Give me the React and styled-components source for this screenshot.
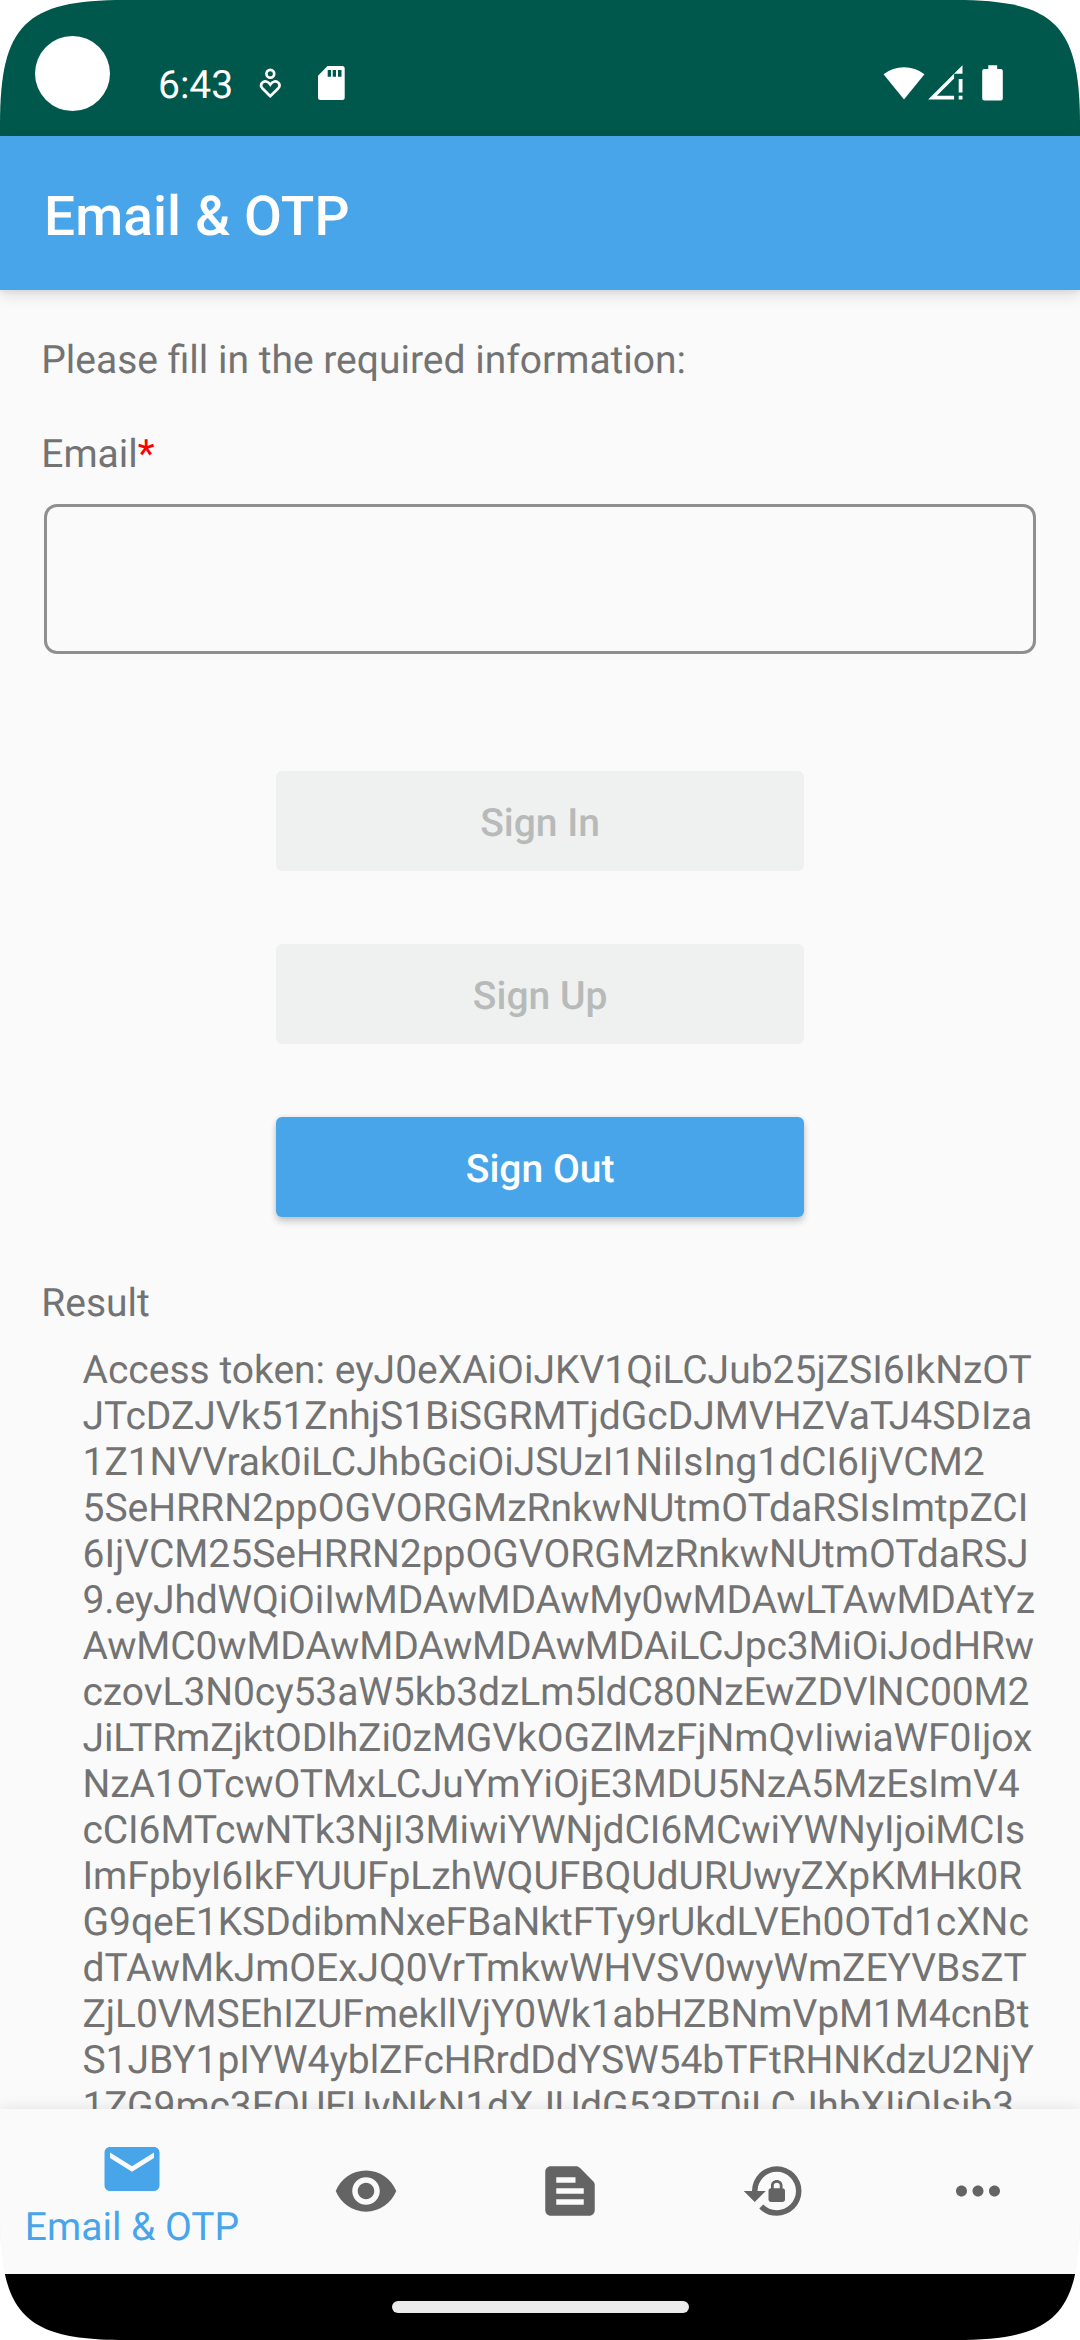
import React from "react";
import styled, { createGlobalStyle } from "styled-components";
import {
  MdEmail,
  MdVisibility,
  MdTextSnippet,
  MdMoreHoriz,
} from "react-icons/md";

const GlobalStyle = createGlobalStyle`
  * { box-sizing: border-box; }
  body { margin: 0; background: #fff; }
`;

const Screen = styled.div`
  width: 1080px;
  height: 2340px;
  display: flex;
  flex-direction: column;
  overflow: hidden;
  background: #fafafa;
  color: #737373;
  font-family: Roboto, "Liberation Sans", sans-serif;
  font-size: 39px;
  line-height: 46px;
  text-rendering: geometricPrecision;
  clip-path: path(
    "M0 125C0 25 25 0 125 0H955C1055 0 1080 25 1080 125V2215C1080 2315 1055 2340 955 2340H125C25 2340 0 2315 0 2215Z"
  );
`;

const StatusBar = styled.header`
  flex: none;
  height: 136px;
  display: flex;
  align-items: flex-start;
  padding: 36px 77px 0 35px;
  background: #00574b;
  color: #fff;
`;

const Camera = styled.div`
  width: 75px;
  height: 75px;
  border-radius: 50%;
  background: #fff;
`;

const Clock = styled.div`
  width: 100px;
  margin: 26px 0 0 48px;
`;

const StatusIcon = styled.svg`
  display: block;
  flex: none;
  margin-top: 28px;
  margin-left: ${(p) => p.$gap || 0}px;
  fill: #fff;
`;

const StatusEnd = styled.div`
  display: flex;
  margin-left: auto;
`;

const AppBar = styled.div`
  flex: none;
  position: relative;
  z-index: 1;
  height: 154px;
  display: flex;
  align-items: center;
  padding: 7px 44px 0;
  background: #48a5ea;
  color: #fff;
  font-size: 55px;
  font-weight: 500;
  line-height: 64px;
  letter-spacing: 0.1px;
  box-shadow: 0 6px 14px rgba(0, 0, 0, 0.1), 0 2px 5px rgba(0, 0, 0, 0.07);
`;

const Content = styled.main`
  flex: 1;
  min-height: 0;
  overflow: hidden;
  padding: 47px 41px 0 41.25px;
`;

const Intro = styled.p`
  margin: 0 0 48px;
`;

const Label = styled.label`
  display: block;
`;

const Required = styled.span`
  color: #ff0000;
`;

const Input = styled.input`
  display: block;
  width: 992px;
  height: 150px;
  margin: 27px 0 117px 3px;
  padding: 0 24px;
  border: 3px solid #8f8f8f;
  border-radius: 13px;
  background: transparent;
  font: inherit;
  color: inherit;
`;

const Actions = styled.div`
  display: flex;
  flex-direction: column;
  align-items: center;
  gap: 73px;
  margin-bottom: 63px;
`;

const Button = styled.button`
  width: 528px;
  height: 100px;
  padding: 4px 0 0;
  border: 0;
  border-radius: 6px;
  font: 500 39px/46px Roboto, "Liberation Sans", sans-serif;
  text-rendering: inherit;
  background: ${(p) => (p.disabled ? "#eff1f1" : "#48a5ea")};
  color: ${(p) => (p.disabled ? "#b8baba" : "#fff")};
  box-shadow: ${(p) =>
    p.disabled
      ? "none"
      : "0 5px 7px rgba(0, 0, 0, 0.18), 0 0 5px rgba(0, 0, 0, 0.1)"};
`;

const ResultTitle = styled.h2`
  margin: 0 0 21px;
  font: inherit;
`;

const Token = styled.div`
  padding-left: 41.25px;
  white-space: nowrap;
`;

const TokenLine = styled.div`
  letter-spacing: ${(p) => p.$tracking}px;
`;

const NavBar = styled.nav`
  flex: none;
  position: relative;
  z-index: 1;
  height: 165px;
  display: flex;
  background: #fafafa;
  box-shadow: 0 0 14px rgba(0, 0, 0, 0.11);
`;

const NavItem = styled.div`
  flex: none;
  width: ${(p) => (p.$active ? 264 : 204)}px;
  display: flex;
  flex-direction: column;
  align-items: center;
  padding-top: ${(p) => (p.$active ? 27 : 49)}px;
  color: ${(p) => (p.$active ? "#48a5ea" : "#646464")};

  svg {
    display: block;
    width: 66px;
    height: 66px;
    fill: currentColor;
  }
`;

const NavLabel = styled.span`
  margin-top: 2px;
`;

const GestureBar = styled.footer`
  flex: none;
  height: 66px;
  display: flex;
  justify-content: center;
  padding-top: 27px;
  background: #000;
`;

const Pill = styled.div`
  width: 297px;
  height: 12px;
  border-radius: 6px;
  background: #ebebeb;
`;

const tokenLines = [
  ["Access token: eyJ0eXAiOiJKV1QiLCJub25jZSI6IkNzOT", 0],
  ["JTcDZJVk51ZnhjS1BiSGRMTjdGcDJMVHZVaTJ4SDIza", 0],
  ["1Z1NVVrak0iLCJhbGciOiJSUzI1NiIsIng1dCI6IjVCM2", -0.03],
  ["5SeHRRN2ppOGVORGMzRnkwNUtmOTdaRSIsImtpZCI", 0],
  ["6IjVCM25SeHRRN2ppOGVORGMzRnkwNUtmOTdaRSJ", 0],
  ["9.eyJhdWQiOiIwMDAwMDAwMy0wMDAwLTAwMDAtYz", -0.14],
  ["AwMC0wMDAwMDAwMDAwMDAiLCJpc3MiOiJodHRw", -0.14],
  ["czovL3N0cy53aW5kb3dzLm5ldC80NzEwZDVlNC00M2", -0.08],
  ["JiLTRmZjktODlhZi0zMGVkOGZlMzFjNmQvIiwiaWF0Ijox", -0.09],
  ["NzA1OTcwOTMxLCJuYmYiOjE3MDU5NzA5MzEsImV4", -0.12],
  ["cCI6MTcwNTk3NjI3MiwiYWNjdCI6MCwiYWNyIjoiMCIs", -0.11],
  ["ImFpbyI6IkFYUUFpLzhWQUFBQUdURUwyZXpKMHk0R", -0.04],
  ["G9qeE1KSDdibmNxeFBaNktFTy9rUkdLVEh0OTd1cXNc", -0.04],
  ["dTAwMkJmOExJQ0VrTmkwWHVSV0wyWmZEYVBsZT", -0.07],
  ["ZjL0VMSEhIZUFmekllVjY0Wk1abHZBNmVpM1M4cnBt", -0.07],
  ["S1JBY1pIYW4yblZFcHRrdDdYSW54bTFtRHNKdzU2NjY", -0.05],
  ["1ZG9mc3FQUFUyNkN1dXJUdG53PT0iLCJhbXIiOlsib3", -0.09],
];

const CareIcon = () => (
  <StatusIcon $gap={0} width="24" height="36" viewBox="257 64 24 36">
    <g fill="none" stroke="#fff" strokeWidth="2.7">
      <circle cx="269.3" cy="73.7" r="3.9" />
      <path d="M269.3 96.2l-8-8a4.2 4.2 0 0 1 0-5.6c2-2 5.6-1.6 8 1.9 2.4-3.5 6-3.9 8-1.9a4.2 4.2 0 0 1 0 5.6z" />
    </g>
  </StatusIcon>
);

const SdCardIcon = () => (
  <StatusIcon $gap={35} width="28" height="38" viewBox="316 64 28 38">
    <path
      fillRule="evenodd"
      d="M326.5 66H341.2a2.5 2.5 0 0 1 2.5 2.5V97.5a2.5 2.5 0 0 1-2.5 2.5H319.5a2.5 2.5 0 0 1-2.5-2.5V75.7zM326.7 70v6.7h3.3V70zM331.7 70v6.7h3.3V70zM337 70v6.7h3.5V70z"
    />
  </StatusIcon>
);

const WifiIcon = () => (
  <StatusIcon width="42" height="38" viewBox="882.5 64 42 38">
    <path d="M903.5 99.5L883 74.3a33.5 33.5 0 0 1 41 0z" />
  </StatusIcon>
);

const SignalIcon = () => (
  <StatusIcon $gap={3} width="35" height="38" viewBox="927.5 64 35 38">
    <path d="M962 65.3V73.8H953.6V78.4L936.3 95.8H953.6V99.5H927.7zM958.2 79h3.8v13.5h-3.8zM958.2 95.8h3.8v3.7h-3.8z" />
  </StatusIcon>
);

const BatteryIcon = () => (
  <StatusIcon $gap={19.5} width="21" height="38" viewBox="982 64 21 38">
    <path d="M988.3 65.2h8.9v3.8h3.6a2 2 0 0 1 2 2v27.4a2 2 0 0 1-2 2h-16.6a2 2 0 0 1-2-2V71a2 2 0 0 1 2-2h4.1z" />
  </StatusIcon>
);

const LockResetIcon = () => (
  <svg viewBox="0 0 24 24">
    <path d="M13 3a9 9 0 0 0-9 9H1l4 4 4-4H6a7 7 0 1 1 7 7c-1.93 0-3.68-.79-4.94-2.06l-1.42 1.42A8.95 8.95 0 0 0 13 21a9 9 0 0 0 0-18z" />
    <path
      fillRule="evenodd"
      d="M15.1 11v-1c0-1.15-.94-2-2.1-2s-2.1.85-2.1 2v1c-.5 0-.9.4-.9.9v3.2c0 .5.4.9.9.9h4.2c.5 0 .9-.4.9-.9v-3.2c0-.5-.4-.9-.9-.9zM14.1 11h-2.2v-1c0-.6.45-1 1.1-1s1.1.4 1.1 1z"
    />
  </svg>
);

export default function App() {
  return (
    <>
      <GlobalStyle />
      <Screen>
        <StatusBar>
          <Camera />
          <Clock>6:43</Clock>
          <CareIcon />
          <SdCardIcon />
          <StatusEnd>
            <WifiIcon />
            <SignalIcon />
            <BatteryIcon />
          </StatusEnd>
        </StatusBar>
        <AppBar>Email &amp; OTP</AppBar>
        <Content>
          <Intro>Please fill in the required information:</Intro>
          <Label htmlFor="email">
            Email<Required>*</Required>
          </Label>
          <Input id="email" type="email" />
          <Actions>
            <Button disabled>Sign In</Button>
            <Button disabled>Sign Up</Button>
            <Button>Sign Out</Button>
          </Actions>
          <ResultTitle>Result</ResultTitle>
          <Token>
            {tokenLines.map(([text, tracking]) => (
              <TokenLine key={text} $tracking={tracking}>
                {text}
              </TokenLine>
            ))}
          </Token>
        </Content>
        <NavBar>
          <NavItem $active>
            <MdEmail />
            <NavLabel>Email &amp; OTP</NavLabel>
          </NavItem>
          <NavItem>
            <MdVisibility />
          </NavItem>
          <NavItem>
            <MdTextSnippet />
          </NavItem>
          <NavItem>
            <LockResetIcon />
          </NavItem>
          <NavItem>
            <MdMoreHoriz />
          </NavItem>
        </NavBar>
        <GestureBar>
          <Pill />
        </GestureBar>
      </Screen>
    </>
  );
}
